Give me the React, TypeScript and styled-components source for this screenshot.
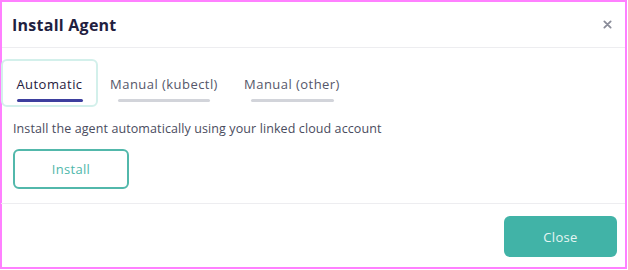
import React, { useState } from "react";
import styled, { createGlobalStyle } from "styled-components";

const Global = createGlobalStyle`
  html, body { margin: 0; padding: 0; background: #ffffff; }
  body { font-family: "Open Sans", "Noto Sans", sans-serif; }
  * { box-sizing: border-box; }
`;

const Dialog = styled.div`
  width: 627px;
  height: 269px;
  border: 2px solid #ff80ff;
  display: flex;
  flex-direction: column;
  background: #fff;
`;

const Header = styled.div`
  height: 46px;
  flex: none;
  display: flex;
  align-items: center;
  justify-content: space-between;
  padding: 0 12px 0 10px;
  border-bottom: 1px solid #ededf0;
`;

const Title = styled.h1`
  margin: 0;
  font-size: 16px;
  font-weight: 700;
  color: #1f2040;
  letter-spacing: 0.25px;
`;

const CloseX = styled.button`
  border: none;
  background: none;
  padding: 0;
  width: 12px;
  height: 12px;
  display: flex;
  align-items: center;
  justify-content: center;
  cursor: pointer;
`;

const Body = styled.div`
  flex: 1;
  padding: 11px 11px 0 0;
  margin-left: -1px;
  border-bottom: 1px solid #ededf0;
`;

const Tabs = styled.div`
  display: flex;
  align-items: stretch;
  height: 48px;
`;

const Tab = styled.button<{ $active?: boolean; $w: number }>`
  width: ${(p) => p.$w}px;
  border: 2px solid ${(p) => (p.$active ? "#d3f0eb" : "transparent")};
  border-radius: 6px;
  background: #fff;
  padding: 0;
  display: flex;
  flex-direction: column;
  align-items: center;
  justify-content: flex-start;
  font-family: inherit;
  cursor: pointer;
`;

const TabLabel = styled.span<{ $active?: boolean }>`
  margin-top: 14px;
  font-size: 13px;
  letter-spacing: 0.45px;
  color: ${(p) => (p.$active ? "#1f2040" : "#55576a")};
  white-space: nowrap;
`;

const Underline = styled.span<{ $active?: boolean; $w: number }>`
  margin-top: 6px;
  width: ${(p) => p.$w}px;
  height: 3px;
  border-radius: 2px;
  background: ${(p) => (p.$active ? "#3d3f9e" : "#d2d4da")};
`;

const Desc = styled.p`
  margin: 13px 0 0 12px;
  font-size: 12.5px;
  letter-spacing: 0.1px;
  color: #4a4c5e;
`;

const OutlineButton = styled.button`
  margin: 12px 0 0 12px;
  width: 116px;
  height: 40px;
  border: 2px solid #52b8ab;
  border-radius: 6px;
  background: #fff;
  color: #4fb7aa;
  font-family: inherit;
  font-size: 13px;
  letter-spacing: 0.3px;
  cursor: pointer;
`;

const Footer = styled.div`
  height: 63px;
  flex: none;
  display: flex;
  align-items: flex-start;
  justify-content: flex-end;
  padding: 12px 8px 0 0;
`;

const PrimaryButton = styled.button`
  width: 113px;
  height: 41px;
  border: none;
  border-radius: 6px;
  background: #41b3a7;
  color: #e6f6f3;
  font-family: inherit;
  font-size: 13px;
  letter-spacing: 0.3px;
  cursor: pointer;
`;

const tabs = [
  { label: "Automatic", w: 97, u: 66 },
  { label: "Manual (kubectl)", w: 132, u: 92 },
  { label: "Manual (other)", w: 124, u: 83 },
];

export default function App() {
  const [active, setActive] = useState(0);
  return (
    <>
      <Global />
      <Dialog>
        <Header>
          <Title>Install Agent</Title>
          <CloseX aria-label="Close">
            <svg width="9" height="9" viewBox="0 0 10 10">
              <path d="M1.5 1.5 L8.5 8.5 M8.5 1.5 L1.5 8.5" stroke="#8a8c99" strokeWidth="2" strokeLinecap="round" />
            </svg>
          </CloseX>
        </Header>
        <Body>
          <Tabs>
            {tabs.map((t, i) => (
              <Tab key={t.label} $w={t.w} $active={i === active} onClick={() => setActive(i)}>
                <TabLabel $active={i === active}>{t.label}</TabLabel>
                <Underline $w={t.u} $active={i === active} />
              </Tab>
            ))}
          </Tabs>
          <Desc>Install the agent automatically using your linked cloud account</Desc>
          <OutlineButton>Install</OutlineButton>
        </Body>
        <Footer>
          <PrimaryButton>Close</PrimaryButton>
        </Footer>
      </Dialog>
    </>
  );
}
